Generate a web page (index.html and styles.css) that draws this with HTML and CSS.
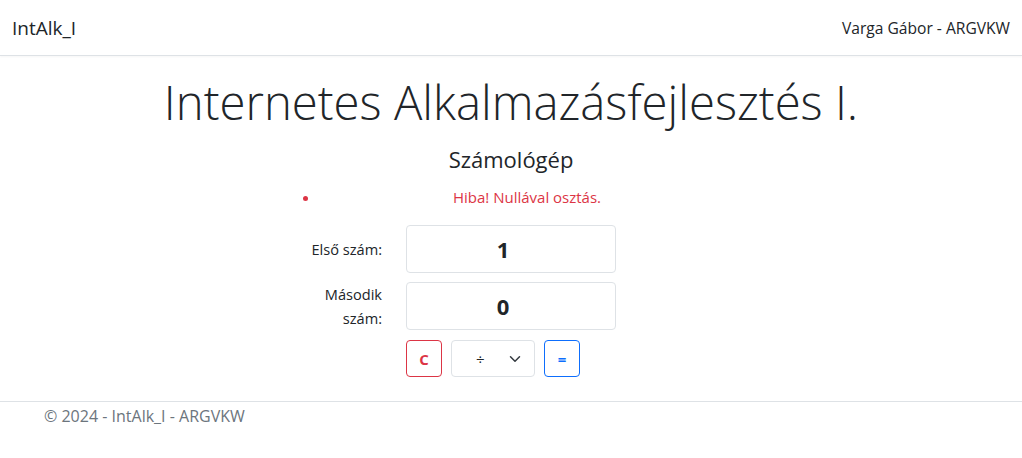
FILE: index.html
```html
<!DOCTYPE html>
<html lang="hu">
<head>
<meta charset="utf-8">
<title>IntAlk_I</title>
<link rel="stylesheet" href="styles.css">
</head>
<body>
<header class="navbar">
  <a class="brand" href="#">IntAlk_I</a>
  <span class="user">Varga Gábor - ARGVKW</span>
</header>
<main class="main">
  <h1 class="display">Internetes Alkalmazásfejlesztés I.</h1>
  <h4 class="subtitle">Számológép</h4>
  <form class="calc">
    <ul class="errors"><li>Hiba! Nullával osztás.</li></ul>
    <div class="row">
      <label class="lbl">Első szám:</label>
      <input class="num" type="text" value="1">
    </div>
    <div class="row">
      <label class="lbl">Második szám:</label>
      <input class="num" type="text" value="0">
    </div>
    <div class="row buttons">
      <span class="lbl"></span>
      <div class="actions">
        <button type="button" class="btn btn-red">C</button>
        <div class="select"><span class="op">÷</span>
          <svg class="chev" width="16" height="16" viewBox="0 0 16 16"><path d="M2 5l6 6 6-6" fill="none" stroke="#343a40" stroke-width="2" stroke-linecap="round" stroke-linejoin="round"/></svg>
        </div>
        <button type="button" class="btn btn-blue">=</button>
      </div>
    </div>
  </form>
</main>
<footer class="footer">© 2024 - IntAlk_I - ARGVKW</footer>
</body>
</html>
```
FILE: styles.css
```css
* { box-sizing: border-box; }
body {
  margin: 0;
  font-family: "Open Sans", "Noto Sans", sans-serif;
  color: #212529;
  background: #fff;
  font-size: 15px;
}
.navbar {
  height: 56px;
  display: flex;
  justify-content: space-between;
  align-items: center;
  padding: 0 12px;
  border-bottom: 1px solid #dee2e6;
  box-shadow: 0 1px 2px rgba(0,0,0,0.04);
}
.brand {
  font-size: 19px;
  color: #212529;
  text-decoration: none;
}
.user { font-size: 15.6px; color: #212529; }
.main {
  display: flex;
  flex-direction: column;
  align-items: center;
  padding-bottom: 24px;
  border-bottom: 1px solid #dee2e6;
}
.display {
  margin: 18px 0 0;
  font-weight: 300;
  font-size: 47.3px;
  line-height: 1.2;
}
.subtitle {
  margin: 15px 0 0;
  font-weight: 400;
  font-size: 22px;
  line-height: 1.2;
}
.calc { width: 460px; }
.errors {
  margin: 15px 0 18px;
  padding-left: 32px;
  color: #dc3545;
  text-align: center;
  font-size: 15px;
  list-style: none;
}
.errors li { position: relative; }
.errors li::before {
  content: "";
  position: absolute;
  left: -10px;
  top: 9px;
  width: 5px;
  height: 5px;
  border-radius: 50%;
  background: #dc3545;
}
.row {
  display: flex;
  align-items: center;
  gap: 24px;
  margin-bottom: 9px;
  margin-left: 25px;
}
.row.buttons { margin-top: 10px; margin-bottom: 0; }
.lbl {
  width: 76px;
  text-align: right;
  font-size: 14.6px;
  line-height: 24px;
}
.num {
  width: 210px;
  height: 48px;
  border: 1px solid #dee2e6;
  border-radius: 4px;
  text-align: center;
  padding: 0 16px 0 0;
  font: 700 22px "Open Sans", sans-serif;
  color: #212529;
}
.actions { display: flex; gap: 9px; }
.btn {
  width: 36px;
  height: 37px;
  background: #fff;
  border-radius: 4px;
  font: 700 15px "Open Sans", sans-serif;
}
.btn-red { border: 1px solid #dc3545; color: #dc3545; }
.btn-blue { border: 1px solid #0d6efd; color: #0d6efd; }
.select {
  width: 84px;
  height: 37px;
  border: 1px solid #dee2e6;
  border-radius: 4px;
  display: flex;
  align-items: center;
  padding: 0 13px 0 24px;
  justify-content: space-between;
  font-size: 15px;
}
.chev { width: 12px; height: 12px; }
.footer {
  padding: 3px 44px;
  color: #6c757d;
  font-size: 16px;
}
```
